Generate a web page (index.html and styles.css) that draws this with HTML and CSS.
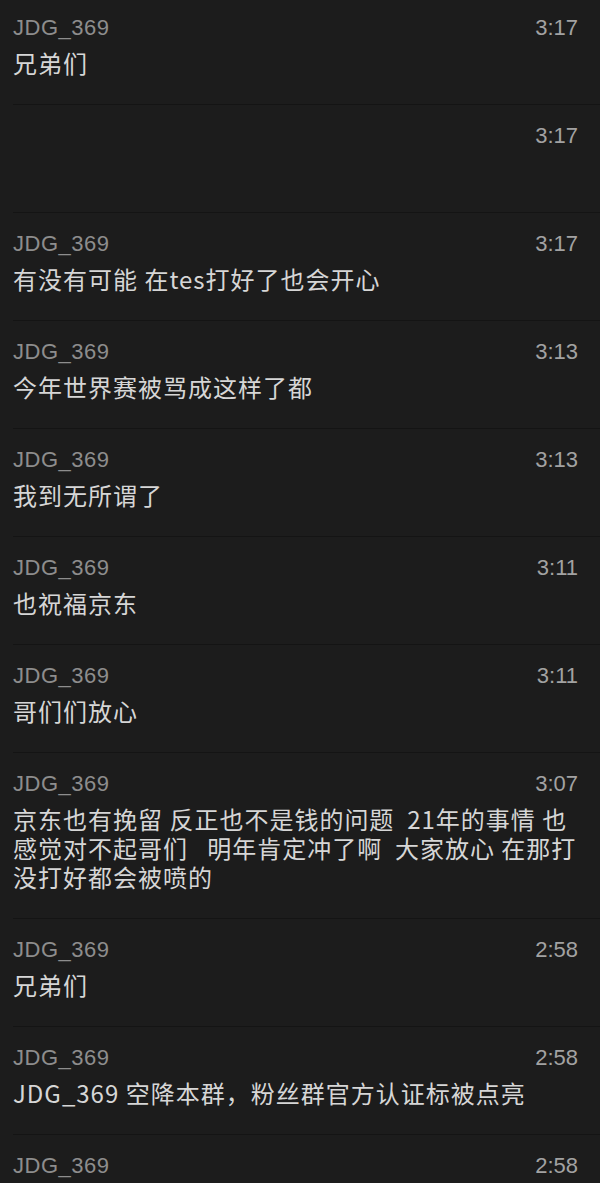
FILE: index.html
```html
<!DOCTYPE html>
<html lang="zh-CN">
<head>
<meta charset="utf-8">
<title>消息</title>
<link rel="stylesheet" href="styles.css">
</head>
<body>
<div class="list">
  <div class="row">
    <div class="head"><span class="name">JDG_369</span><span class="time">3:17</span></div>
    <div class="msg">兄弟们</div>
  </div>
  <div class="row">
    <div class="head"><span class="name"></span><span class="time">3:17</span></div>
    <div class="msg"></div>
  </div>
  <div class="row">
    <div class="head"><span class="name">JDG_369</span><span class="time">3:17</span></div>
    <div class="msg">有没有可能 在tes打好了也会开心</div>
  </div>
  <div class="row">
    <div class="head"><span class="name">JDG_369</span><span class="time">3:13</span></div>
    <div class="msg">今年世界赛被骂成这样了都</div>
  </div>
  <div class="row">
    <div class="head"><span class="name">JDG_369</span><span class="time">3:13</span></div>
    <div class="msg">我到无所谓了</div>
  </div>
  <div class="row">
    <div class="head"><span class="name">JDG_369</span><span class="time">3:11</span></div>
    <div class="msg">也祝福京东</div>
  </div>
  <div class="row">
    <div class="head"><span class="name">JDG_369</span><span class="time">3:11</span></div>
    <div class="msg">哥们们放心</div>
  </div>
  <div class="row">
    <div class="head"><span class="name">JDG_369</span><span class="time">3:07</span></div>
    <div class="msg">京东也有挽留 反正也不是钱的问题&nbsp; 21年的事情 也感觉对不起哥们&nbsp;&nbsp; 明年肯定冲了啊&nbsp; 大家放心 在那打没打好都会被喷的</div>
  </div>
  <div class="row">
    <div class="head"><span class="name">JDG_369</span><span class="time">2:58</span></div>
    <div class="msg">兄弟们</div>
  </div>
  <div class="row">
    <div class="head"><span class="name">JDG_369</span><span class="time">2:58</span></div>
    <div class="msg">JDG_369 空降本群，粉丝群官方认证标被点亮</div>
  </div>
  <div class="row">
    <div class="head"><span class="name">JDG_369</span><span class="time">2:58</span></div>
    <div class="msg"></div>
  </div>
</div>
</body>
</html>
```

FILE: styles.css
```css
html, body {
  margin: 0;
  padding: 0;
  background: #1c1c1c;
}
body {
  width: 600px;
  height: 1183px;
  overflow: hidden;
  font-family: "Noto Sans CJK SC", "Noto Sans", sans-serif;
  -webkit-font-smoothing: antialiased;
}
.list {
  padding-left: 13px;
}
.row {
  border-top: 1px solid #141414;
  padding: 15px 22px 27px 0;
}
.row:first-child {
  border-top: none;
  padding-top: 12px;
}
.head {
  display: flex;
  justify-content: space-between;
  align-items: center;
  height: 32px;
}
.name {
  font-family: "Liberation Sans", "Noto Sans CJK SC", sans-serif;
  font-size: 22px;
  letter-spacing: 0.5px;
  color: #8d8d8d;
  line-height: 32px;
}
.time {
  font-family: "Liberation Sans", "Noto Sans CJK SC", sans-serif;
  font-size: 22px;
  color: #a2a2a2;
  line-height: 32px;
}
.msg {
  margin-top: 4px;
  min-height: 29px;
  font-size: 24px;
  line-height: 29px;
  letter-spacing: 1px;
  color: #d6d6d6;
  white-space: normal;
  word-break: break-all;
}
```
